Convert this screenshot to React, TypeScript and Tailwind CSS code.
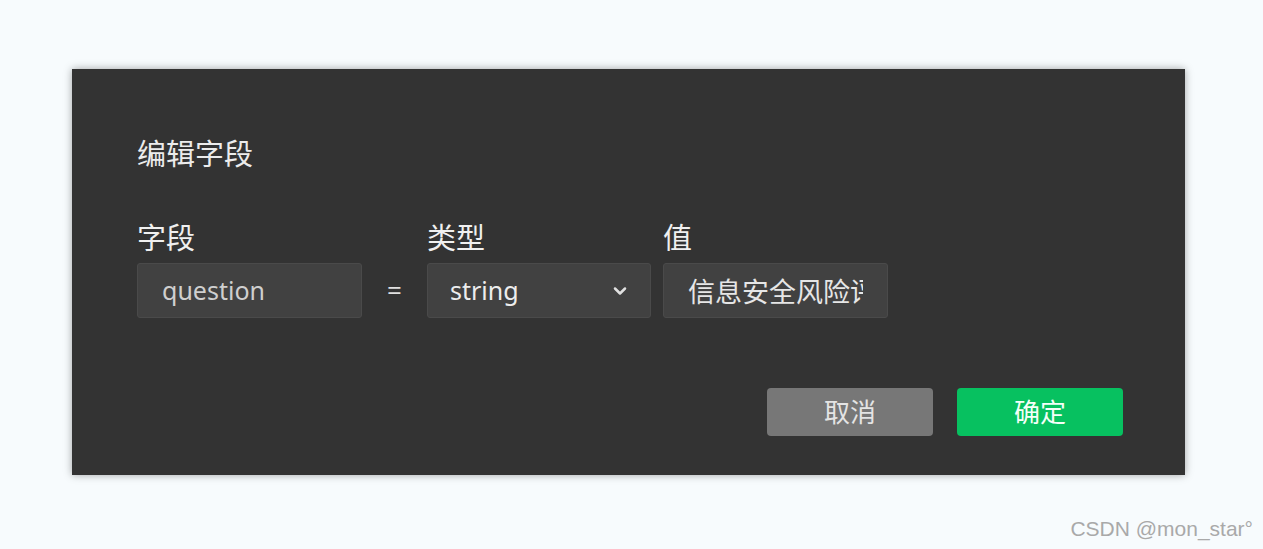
import { ChevronDown } from 'lucide-react';

const cjk = { fontFamily: '"Noto Sans", "Noto Sans CJK SC", sans-serif' };

export default function App() {
  return (
    <div className="relative min-h-[549px] w-full bg-[#f7fbfd]" style={cjk}>
      <div className="px-[72px] pt-[69px] pr-[78px]">
        <div className="flex h-[406px] flex-col bg-[#333333] pl-[65px] pr-[62px] pt-[66px] shadow-[0_0_8px_rgba(0,0,0,0.35)]">
          <h2 className="text-[29px] font-normal leading-[38px] text-[#ececec]">编辑字段</h2>

          <div className="mt-[46px] flex items-end">
            <div className="flex flex-col">
              <label className="text-[29px] leading-[38px] text-[#f0f0f0]">字段</label>
              <div className="mt-[6px] flex h-[55px] w-[225px] items-center rounded-[3px] border border-[#4a4a4a] bg-[#414141] px-[24px] text-[25px] text-[#cfcfcf]">
                question
              </div>
            </div>
            <div className="flex h-[55px] w-[65px] items-center justify-center text-[26px] text-[#e0e0e0]">=</div>
            <div className="flex flex-col">
              <label className="text-[29px] leading-[38px] text-[#f0f0f0]">类型</label>
              <div className="mt-[6px] flex h-[55px] w-[224px] items-center justify-between rounded-[3px] border border-[#4a4a4a] bg-[#414141] pl-[22px] pr-[20px] text-[25px] text-[#ededed]">
                <span>string</span>
                <ChevronDown className="h-[20px] w-[20px] text-[#e0e0e0]" strokeWidth={3} />
              </div>
            </div>
            <div className="ml-[12px] flex flex-col">
              <label className="text-[29px] leading-[38px] text-[#f0f0f0]">值</label>
              <input
                readOnly
                value="信息安全风险评估"
                className="mt-[6px] h-[55px] w-[225px] rounded-[3px] border border-[#4a4a4a] bg-[#414141] px-[24px] text-[27px] text-[#e6e6e6] outline-none"
                style={cjk}
              />
            </div>
          </div>

          <div className="mt-[70px] flex justify-end gap-[24px]">
            <button className="h-[48px] w-[166px] rounded-[4px] bg-[#777777] text-[26px] text-[#e4e4e4]">取消</button>
            <button className="h-[48px] w-[166px] rounded-[4px] bg-[#07c160] text-[26px] text-[#f4fff8]">确定</button>
          </div>
        </div>
      </div>
      <div className="absolute bottom-[5px] right-[10px] text-[21px] text-[#a9a9a9]" style={{ fontFamily: '"Liberation Sans", Arial, sans-serif' }}>
        CSDN @mon_star°
      </div>
    </div>
  );
}
